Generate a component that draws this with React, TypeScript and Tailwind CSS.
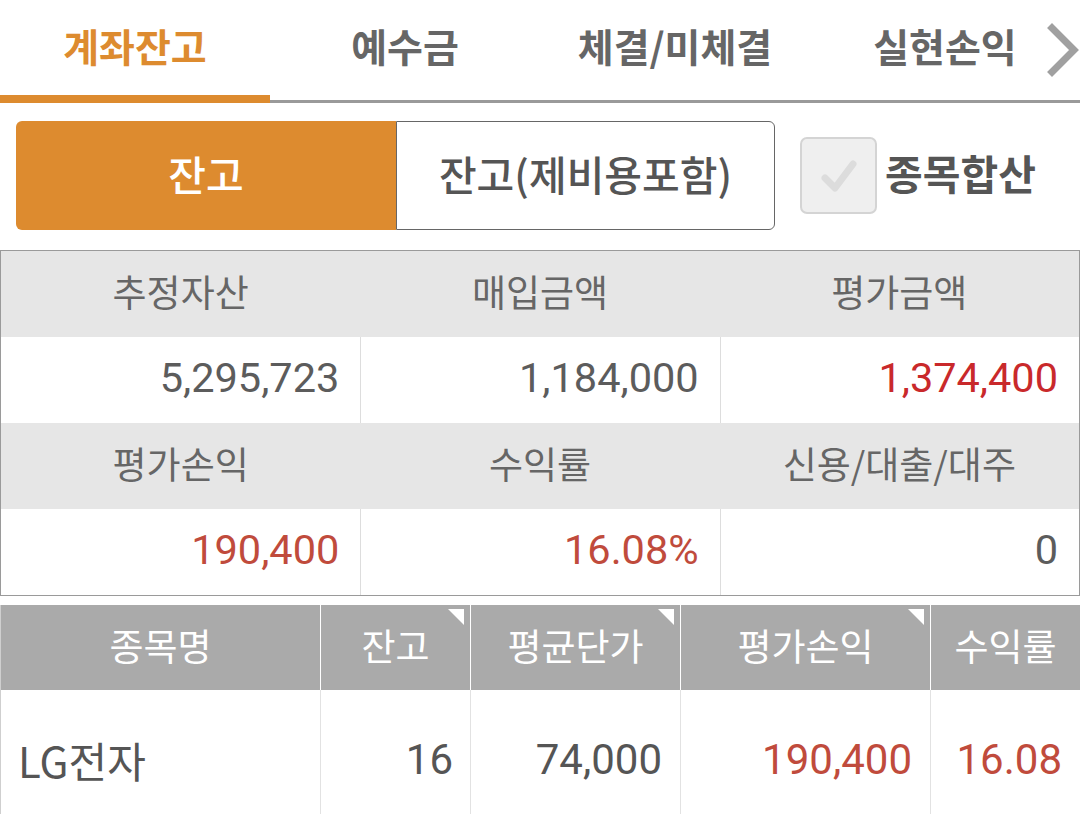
const kr = { fontFamily: '"Noto Sans CJK KR", "Noto Sans", sans-serif' };
const num = { fontFamily: 'Roboto, "Noto Sans CJK KR", sans-serif' };

const tabs = ['계좌잔고', '예수금', '체결/미체결', '실현손익'];

const Corner = () => (
  <svg className="absolute top-[4px] right-[6px]" width="16" height="16" viewBox="0 0 16 16">
    <polygon points="0,0 16,0 16,16" fill="#ffffff" />
  </svg>
);

const SummaryHead = ({ labels }: { labels: string[] }) => (
  <div className="grid grid-cols-3 h-[86px] bg-[#e6e6e6] text-[37px] text-[#666]">
    {labels.map((l) => (
      <div key={l} className="flex items-center justify-center pb-[4px]">
        {l}
      </div>
    ))}
  </div>
);

const SummaryValues = ({ values }: { values: { v: string; c: string }[] }) => (
  <div className="grid grid-cols-3 h-[86px] text-[41.5px]" style={num}>
    {values.map((x, i) => (
      <div
        key={i}
        className={`flex items-center justify-end pr-[21px] pb-[3px] ${i > 0 ? 'border-l border-[#dddddd]' : ''}`}
        style={{ color: x.c }}
      >
        {x.v}
      </div>
    ))}
  </div>
);

export default function App() {
  return (
    <div className="w-[1080px] h-[814px] overflow-hidden bg-white" style={kr}>
      {/* top tabs */}
      <div className="relative">
        <div className="flex h-[95px]">
          {tabs.map((t, i) => (
            <div
              key={t}
              className={`w-[270px] flex items-center justify-center pb-[4px] text-[39px] font-bold ${
                i === 0 ? 'text-[#dd8b2f]' : 'text-[#666]'
              }`}
            >
              {t}
            </div>
          ))}
        </div>
        <div className="flex items-end h-[8px]">
          <div className="w-[270px] h-[8px] bg-[#dd8b2f]" />
          <div className="flex-1 h-[3px] bg-[#9a9a9a]" />
        </div>
        <svg className="absolute right-0 top-[20px] bg-white" width="40" height="60" viewBox="0 0 40 60">
          <polyline points="12,8 34,30 12,52" fill="none" stroke="#a0a0a0" strokeWidth="7" strokeLinecap="square" />
        </svg>
      </div>

      {/* segmented + checkbox */}
      <div className="flex items-center mt-[18px] pl-[16px]">
        <div className="flex h-[109px] w-[759px]">
          <div className="w-[380px] bg-[#dd8b2f] rounded-l-[6px] flex items-center justify-center text-white text-[41px] font-medium pb-[4px]">
            잔고
          </div>
          <div className="flex-1 border border-[#666] rounded-r-[6px] flex items-center justify-center text-[#555] text-[41px] font-medium pb-[4px]">
            잔고(제비용포함)
          </div>
        </div>
        <div className="ml-[25px] w-[77px] h-[77px] rounded-[7px] bg-[#efefef] border-2 border-[#d4d4d4] flex items-center justify-center">
          <svg width="40" height="40" viewBox="0 0 40 40">
            <polyline
              points="6,22 16,32 34,8"
              fill="none"
              stroke="#dcdcdc"
              strokeWidth="7"
              strokeLinecap="round"
              strokeLinejoin="round"
            />
          </svg>
        </div>
        <div className="ml-[8px] text-[41px] font-bold text-[#555] pb-[6px]">종목합산</div>
      </div>

      {/* summary table */}
      <div className="mt-[20px] border border-[#9a9a9a]">
        <SummaryHead labels={['추정자산', '매입금액', '평가금액']} />
        <SummaryValues
          values={[
            { v: '5,295,723', c: '#5c5c5c' },
            { v: '1,184,000', c: '#5c5c5c' },
            { v: '1,374,400', c: '#c9292b' },
          ]}
        />
        <SummaryHead labels={['평가손익', '수익률', '신용/대출/대주']} />
        <SummaryValues
          values={[
            { v: '190,400', c: '#c04b3c' },
            { v: '16.08%', c: '#c04b3c' },
            { v: '0', c: '#5c5c5c' },
          ]}
        />
      </div>

      {/* stock table */}
      <div className="mt-[9px] border-l border-[#cfcfcf]">
        <div className="flex h-[85px] bg-[#aaaaaa] text-white text-[37px]">
          <div className="w-[319px] flex items-center justify-center pb-[4px]">종목명</div>
          <div className="relative w-[150px] border-l border-white flex items-center justify-center pb-[4px]">
            잔고
            <Corner />
          </div>
          <div className="relative w-[210px] border-l border-white flex items-center justify-center pb-[4px]">
            평균단가
            <Corner />
          </div>
          <div className="relative w-[250px] border-l border-white flex items-center justify-center pb-[4px]">
            평가손익
            <Corner />
          </div>
          <div className="flex-1 border-l border-white flex items-center justify-center pb-[4px]">수익률</div>
        </div>
        <div className="flex h-[138px] text-[42px] text-[#555]" style={num}>
          <div className="w-[319px] flex items-center pl-[17px]" style={kr}>
            LG전자
          </div>
          <div className="w-[150px] border-l border-[#e2e2e2] flex items-center justify-end pr-[17px]">16</div>
          <div className="w-[210px] border-l border-[#e2e2e2] flex items-center justify-end pr-[18px]">74,000</div>
          <div className="w-[250px] border-l border-[#e2e2e2] flex items-center justify-end pr-[18px] text-[#c04b3c]">
            190,400
          </div>
          <div className="flex-1 border-l border-[#e2e2e2] flex items-center justify-end pr-[18px] text-[#c04b3c]">
            16.08
          </div>
        </div>
      </div>
    </div>
  );
}
